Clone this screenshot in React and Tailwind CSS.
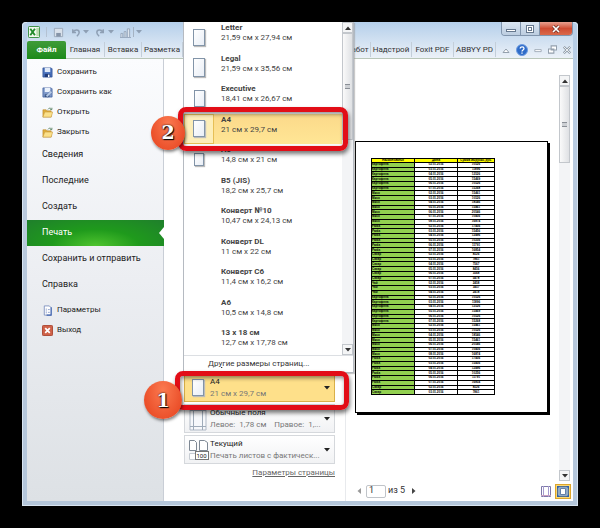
import { useState } from "react";

const menuIcons = { save: SaveIcon, saveAs: SaveAsIcon, open: FolderIcon, close: FolderIcon };

const fileActions = [
  { label: "Сохранить", icon: "save" },
  { label: "Сохранить как", icon: "saveAs" },
  { label: "Открыть", icon: "open" },
  { label: "Закрыть", icon: "close" },
];

const sections = ["Сведения", "Последние", "Создать", "Печать", "Сохранить и отправить", "Справка"];

const paperSizes = [
  { name: "Letter", size: "21,59 см x 27,94 см", icon: "h-[17px] w-3" },
  { name: "Legal", size: "21,59 см x 35,56 см", icon: "h-[19px] w-3" },
  { name: "Executive", size: "18,41 см x 26,67 см", icon: "h-[17px] w-[11px]" },
  { name: "A4", size: "21 см x 29,7 см", icon: "h-[17px] w-3" },
  { name: "A5", size: "14,8 см x 21 см", icon: "h-[13px] w-[10px]" },
  { name: "B5 (JIS)", size: "18,2 см x 25,7 см" },
  { name: "Конверт №10", size: "10,47 см x 24,13 см" },
  { name: "Конверт DL", size: "11 см x 22 см" },
  { name: "Конверт C6", size: "11,4 см x 16,2 см" },
  { name: "A6", size: "10,5 см x 14,8 см" },
  { name: "13 x 18 см", size: "12,7 см x 17,78 см" },
];

// [product, number of rows]
const groups = [
  ["Картофель", 6],
  ["Мясо", 7],
  ["Рыба", 6],
  ["Сахар", 6],
  ["Чай", 3],
  ["Картофель", 6],
  ["Мясо", 7],
  ["Рыба", 6],
  ["Сахар", 2],
];

const sums = {
  Картофель: ["10526", "11896", "12526", "15469", "10526", "15268"],
  Мясо: ["15461", "10526", "18546", "15461", "20546", "10456", "16874"],
  Рыба: ["17456", "15456", "12496", "10256", "11791", "16854"],
  Сахар: ["8526", "7861", "7567", "8456", "3568", "5478"],
  Чай: ["2458", "3457", "2418"],
};

const rows = groups.flatMap(([name, count]) =>
  Array.from({ length: count }, (_, i) => ({
    name,
    date: `0${i + 2}.01.2016`,
    sum: sums[name][i],
  }))
);

function SaveIcon() {
  return (
    <svg viewBox="0 0 12 12" className="size-[11px]">
      <path d="M1 1h9l1 1v9H1z" fill="#4a72bd" stroke="#2f4f96" strokeWidth=".8" />
      <path d="M3 1h6v4.500H3z" fill="#dfe9f8" />
      <path d="M3 7.500h6V11H3z" fill="#1f3a78" />
      <path d="M6.500 8.300h1.700V11H6.500z" fill="#fff" />
    </svg>
  );
}

function SaveAsIcon() {
  return (
    <svg viewBox="0 0 12 12" className="size-[11px]">
      <path d="M1 1h9l1 1v9H1z" fill="#7d97c8" stroke="#3f5f9f" strokeWidth=".8" />
      <path d="M3 1h6v4.500H3z" fill="#eaf1fb" />
      <path d="M3 8h5v3H3z" fill="#35507f" />
      <path d="M4 9.500 9.500 4l1.800 1.800L6 11z" fill="#b8cbe8" stroke="#58719c" strokeWidth=".5" />
    </svg>
  );
}

function FolderIcon() {
  return (
    <svg viewBox="0 0 12 12" className="size-[11px]">
      <path d="M1 3h3.500l1 1.200H10V11H1z" fill="#e0ae3c" stroke="#b3852a" strokeWidth=".6" />
      <path d="M1 11 3 5.500h8.700L10 11z" fill="#fbe08a" stroke="#c6983a" strokeWidth=".6" />
      <path d="M6.500 2.600C7.500.9 9.300.9 10.200 2.200M10.800.8v2H8.900" fill="none" stroke="#4c7a57" strokeWidth=".9" />
    </svg>
  );
}

function OptionsIcon() {
  return (
    <svg viewBox="0 0 12 12" className="size-[11px]">
      <path d="M2.500 1H8l2 2v8H2.500z" fill="#fff" stroke="#7388b8" strokeWidth=".9" />
      <path d="M10 2.500V11H5" fill="none" stroke="#3f63b0" strokeWidth="1.200" />
      <path d="M4 4.500h1.500M4 6.500h1.500M4 8.500h1.500M6.500 5h2M6.500 8h2" stroke="#6d84ba" strokeWidth=".8" />
    </svg>
  );
}

function ExitIcon() {
  return (
    <svg viewBox="0 0 12 12" className="size-[11px]">
      <rect x=".5" y=".5" width="11" height="11" rx="1" fill="#cf6148" stroke="#a9432e" />
      <path d="m3.500 3.500 5 5m0-5-5 5" stroke="#fff" strokeWidth="1.900" />
    </svg>
  );
}

function Caret({ className = "text-[#222]" }) {
  return (
    <svg viewBox="0 0 6 4" className={`h-1 w-1.5 shrink-0 ${className}`}>
      <path d="M0 0h6L3 3.500z" fill="currentColor" />
    </svg>
  );
}

function PageIcon({ className }) {
  return (
    <span
      className={`block border border-[#8294a8] bg-linear-to-br from-white to-[#e9eef6] shadow-[1px_1px_1px_#bbb] ${className}`}
    />
  );
}

function TitleBar() {
  return (
    <div className="flex h-[19px] items-start">
      <div className="flex items-center gap-1.5 pt-1 pl-px text-[#8e9fb4]">
        <svg viewBox="0 0 13 13" className="size-3">
          <rect x=".5" y=".5" width="12" height="12" rx="1" fill="#f3faef" stroke="#2c8a34" />
          <path d="M9 2h3v9H9z" fill="#b9dcae" />
          <path d="m2.500 3 5 7M7.500 3l-5 7" stroke="#218a2b" strokeWidth="2" />
        </svg>
        <span className="h-2.5 w-px bg-[#b4c2d2]" />
        <svg viewBox="0 0 12 12" className="size-[11px]">
          <path d="M1.500 1.500h9v9h-9z" fill="#d9e1eb" stroke="#9aa8ba" />
          <path d="M3.500 6.500h5v4h-5z" fill="#8594a8" />
        </svg>
        <svg viewBox="0 0 12 12" className="size-[11px]">
          <path d="M3 2.500v3.500h3.500M3.500 5.500C5 2.500 10 2.500 10 6c0 2-1.500 3-2.500 4" fill="none" stroke="currentColor" strokeWidth="1.600" />
        </svg>
        <Caret className="-ml-1 text-[#8e9fb4]" />
        <svg viewBox="0 0 12 12" className="size-[11px]">
          <path d="M9 2.500v3.500H5.500M8.500 5.500C7 2.500 2 2.500 2 6c0 2 1.500 3 2.500 4" fill="none" stroke="currentColor" strokeWidth="1.600" />
        </svg>
        <Caret className="-ml-1 text-[#8e9fb4]" />
        <svg viewBox="0 0 12 12" className="size-[11px]">
          <path d="M1 11V7h2v4M4.500 11V5h2v6M8 11V2h2.500v9M0 11.500h12" fill="#dde5ee" stroke="currentColor" strokeWidth=".9" />
        </svg>
        <span className="-ml-1 h-2.5 w-px bg-[#a4b2c2]" />
        <Caret className="-ml-1 text-[#8e9fb4]" />
      </div>
      <div className="ml-auto flex h-[14px] overflow-hidden rounded-b-sm border border-t-0 border-[#8195ad]">
        <button aria-label="Свернуть" className="flex w-[19px] items-center justify-center border-r border-[#8195ad] bg-linear-to-b from-[#dbe6f2] to-[#bccde0]">
          <span className="mt-1 h-[3px] w-2.5 border border-[#66788e] bg-white" />
        </button>
        <button aria-label="Развернуть" className="flex w-[19px] items-center justify-center border-r border-[#8195ad] bg-linear-to-b from-[#dbe6f2] to-[#bccde0]">
          <span className="flex size-2 items-center justify-center border border-[#66788e] bg-white">
            <span className="size-1 border border-[#66788e]" />
          </span>
        </button>
        <button aria-label="Закрыть окно" className="flex w-8 items-center justify-center bg-linear-to-b from-[#e8a090] via-[#cf4b32] to-[#d9694a]">
          <svg viewBox="0 0 8 8" className="size-2">
            <path d="m1 1 6 6m0-6L1 7" stroke="#6b2c22" strokeWidth="3" />
            <path d="m1 1 6 6m0-6L1 7" stroke="#fff" strokeWidth="1.700" />
          </svg>
        </button>
      </div>
    </div>
  );
}

function Tab({ children, className = "w-[37px]" }) {
  return (
    <button className={`h-[15px] shrink-0 border-r border-[#c3ced9] text-center text-[8px] leading-[14px] whitespace-nowrap ${className}`}>
      {children}
    </button>
  );
}

function Ribbon() {
  return (
    <div className="flex h-[18px] items-center border-b border-[#b9c6b9] text-[#333]">
      <button className="h-[18px] w-[39px] rounded-t-xs bg-linear-to-b from-[#3f9b38] to-[#1a8a1a] text-[8px] font-bold text-white">
        Файл
      </button>
      <Tab className="w-[39px]">Главная</Tab>
      <Tab>Вставка</Tab>
      <Tab className="w-[41px]">Разметка</Tab>
      <div className="ml-auto flex items-center">
        <Tab className="w-[26px]">Работ</Tab>
        <Tab className="w-[41px]">Надстрой</Tab>
        <Tab className="w-[42px]">Foxit PDF</Tab>
        <Tab className="w-[42px]">ABBYY PD</Tab>
      </div>
      <div className="flex w-[77px] items-center justify-between pr-0.5 pl-1.5 text-[#94a0ad]">
        <svg viewBox="0 0 8 8" className="size-2">
          <path d="M1 6.500 4 3l3 3.500z" fill="#fff" stroke="currentColor" />
        </svg>
        <svg viewBox="0 0 12 12" className="size-3">
          <circle cx="6" cy="6" r="5.500" fill="#2f6cc8" stroke="#6d9be0" />
          <path d="M4.200 4.600C4.200 2.200 8 2.300 8 4.500 8 6 6 5.900 6 7.400M6 8.400v1.300" fill="none" stroke="#fff" strokeWidth="1.300" />
        </svg>
        <svg viewBox="0 0 10 10" className="size-2">
          <path d="M1 4.500h8v2.500H1z" fill="#fff" stroke="currentColor" />
        </svg>
        <svg viewBox="0 0 10 10" className="size-[9px]">
          <path d="M3.500 1h6v4.500h-6zM.5 4.500h6V9h-6z" fill="#fff" stroke="currentColor" strokeWidth="1.200" />
        </svg>
        <svg viewBox="0 0 10 10" className="size-2">
          <path d="m1 1 8 8m0-8L1 9" stroke="currentColor" strokeWidth="3" />
          <path d="m1 1 8 8m0-8L1 9" stroke="#fff" strokeWidth="1" />
        </svg>
      </div>
    </div>
  );
}

function SmallItem({ icon, children }) {
  return (
    <button className="flex h-5 w-full items-center gap-1 pl-[15px] text-left text-[8px] text-[#222]">
      {icon}
      {children}
    </button>
  );
}

function Sidebar() {
  return (
    <nav className="w-[137px] shrink-0 border-r border-[#c9ced6] bg-linear-to-b from-[#fbfcfe] via-[#eceef2] to-[#dde1e5] pt-[3px]">
      {fileActions.map(({ label, icon }) => {
        const Icon = menuIcons[icon];
        return (
          <SmallItem key={label} icon={<Icon />}>
            {label}
          </SmallItem>
        );
      })}
      {sections.map((label) =>
        label === "Печать" ? (
          <button
            key={label}
            className="flex h-[26px] w-[137px] items-center justify-between bg-[radial-gradient(ellipse_at_50%_100%,#4fc42e,#1f9a1c_45%,#1f7f2c)] pl-[15px] text-[9px] text-white"
          >
            {label}
            <svg viewBox="0 0 5 12" className="h-3 w-[5px]">
              <path d="M5 0v12L0 6z" fill="#fff" />
            </svg>
          </button>
        ) : (
          <button key={label} className="flex h-[26px] w-full items-center pl-[15px] text-[9px] text-[#222]">
            {label}
          </button>
        )
      )}
      <div className="pt-0.5">
        <SmallItem icon={<OptionsIcon />}>Параметры</SmallItem>
        <SmallItem icon={<ExitIcon />}>Выход</SmallItem>
      </div>
    </nav>
  );
}

function Callout({ number, ring, badge }) {
  return (
    <>
      <span className={`pointer-events-none absolute z-20 rounded-lg border-[5px] border-[#e20d17] shadow-[1px_3px_4px_#0008,inset_1px_2px_4px_#0007] ${ring}`} />
      <span
        className={`absolute z-30 flex items-center justify-center rounded-full bg-radial-[at_50%_25%] from-[#fb7a50] to-[#e5401c] font-['DejaVu_Serif',serif] text-[19px] font-bold text-white shadow-[1px_2px_3px_#0007] [text-shadow:0_0_2px_#000,1px_1px_1px_#000] ${badge}`}
      >
        {number}
      </span>
    </>
  );
}

function ScrollButton({ up, label }) {
  return (
    <button aria-label={label} className="flex h-[11px] w-full shrink-0 items-center justify-center border border-[#c3c7cc] bg-[#f4f5f6]">
      <Caret className={up ? "rotate-180 text-[#333]" : "text-[#333]"} />
    </button>
  );
}

function Scrollbar({ thumb }) {
  return (
    <div className="flex w-[11px] shrink-0 flex-col bg-[#f3f4f6]">
      <ScrollButton up label="Вверх" />
      <div className={`flex items-center justify-center border border-[#c3c7cc] bg-linear-to-r from-[#fafafa] to-[#dfe1e4] ${thumb}`}>
        <span className="h-[5px] w-[5px] border-y border-[#8a8f96] bg-[#cdd0d4]" />
      </div>
      <div className="flex-1" />
      <ScrollButton label="Вниз" />
    </div>
  );
}

function SizeMenu({ selected, onSelect }) {
  return (
    <div className="absolute bottom-full -left-px z-10 w-[171px] border-x border-b border-[#b5bac1] bg-white shadow-[1px_1px_1px_#9998]">
      <div className="flex h-[334px] border-b border-[#dcdfe3]">
        <ul className="grid h-[336px] flex-1 auto-rows-fr">
          {paperSizes.map((paper) => (
            <li key={paper.name} className="relative">
              <button
                onClick={() => onSelect(paper)}
                className={`flex size-full text-left ${paper.name === selected ? "bg-linear-to-b from-[#fbd98a] to-[#ffe695]" : ""}`}
              >
                <span
                  className={`flex h-full w-[30px] items-center justify-center ${paper.name === selected ? "border border-[#e6bf55] bg-[#fdeeb8]" : ""}`}
                >
                  {paper.icon && <PageIcon className={paper.icon} />}
                </span>
                <span className="pt-px pl-[7px] text-[8px] leading-[10px] whitespace-nowrap text-[#444]">
                  <b className="block">{paper.name}</b>
                  {paper.size}
                </span>
              </button>
              {paper.name === "A4" && (
                <Callout number="2" ring="-inset-x-1.5 -inset-y-[7px]" badge="-left-[33px] top-0.5 size-[34px]" />
              )}
            </li>
          ))}
        </ul>
        <Scrollbar thumb="h-[107px]" />
      </div>
      <button className="block h-4 w-full pl-6 text-left text-[8px] leading-4 text-[#333]">
        Др<u>у</u>гие размеры страниц...
      </button>
    </div>
  );
}

function SettingButton({ icon, title, detail, active }) {
  return (
    <button
      className={`flex h-[29px] w-full items-center border pr-1 text-left text-[8px] whitespace-nowrap ${active ? "border-[#d9b04a] bg-[#fee08a]" : "border-[#d5d8dc] bg-linear-to-b from-white to-[#f1f2f4]"}`}
    >
      <span className="flex w-[25px] shrink-0 justify-center">{icon}</span>
      <span className="min-w-0 flex-1 leading-3 text-[#777]">
        <span className="block text-[#222]">{title}</span>
        <span className="block whitespace-pre">{detail}</span>
      </span>
      <Caret />
    </button>
  );
}

function Settings() {
  const [paper, setPaper] = useState(paperSizes[3]);

  return (
    <div className="flex w-[182px] shrink-0 flex-col justify-end gap-0.5 border-r border-[#e8eaed] pr-2.5 pb-[21px] pl-5">
      <div className="relative">
        <SizeMenu selected={paper.name} onSelect={setPaper} />
        <SettingButton active icon={<PageIcon className="h-[17px] w-3" />} title={paper.name} detail={paper.size} />
        <Callout number="1" ring="-left-[9px] -right-3.5 -top-0.5 -bottom-2" badge="-left-10 top-2 size-[38px]" />
      </div>
      <SettingButton
        icon={
          <svg viewBox="0 0 18 24" className="h-6 w-[18px]">
            <path d="M1 0h16v23H1z" fill="#f6f8fb" stroke="#b0b9c5" />
            <path d="M4.500 0v23M13.500 0v23M1 3.500h16M1 19.500h16" stroke="#9fabb9" />
          </svg>
        }
        title="Обычные поля"
        detail="Левое:  1,78 см    Правое:  1,..."
      />
      <SettingButton
        icon={
          <svg viewBox="0 0 22 24" className="h-6 w-[22px]">
            <path d="M2.500 2.500h5l2 2v8h-7zM12.500 2.500h5l3 2v8h-8z" fill="#fff" stroke="#7e8894" />
            <path d="M2.500 15.500h6v6h-6z" fill="#fff" stroke="#c7ccd3" />
            <rect x="8.500" y="13.500" width="13" height="8" fill="#fff" stroke="#777" />
            <text x="9.500" y="20" fontSize="6" fill="#222">100</text>
          </svg>
        }
        title="Текущий"
        detail="Печать листов с фактическ..."
      />
      <a href="#page-setup" className="self-end text-[8px] leading-[14px] text-[#666] underline">
        Параметры страницы
      </a>
    </div>
  );
}

function Sheet() {
  return (
    <div className="mt-[82px] mr-[11px] ml-[9px] h-[272px] border border-black bg-white pt-4 pl-[15px] shadow-[2px_2px_0_#000]">
      <table className="h-[237px] w-[124px] table-fixed border-collapse font-['Liberation_Sans',sans-serif] text-[3px] leading-[3px] font-bold text-black">
        <thead>
          <tr className="bg-[#ffff00] italic">
            <th className="w-[43px] border border-black p-0">Наименование</th>
            <th className="w-[43px] border border-black p-0">Дата</th>
            <th className="border border-black p-0 whitespace-nowrap">Сумма выручки, руб.</th>
          </tr>
        </thead>
        <tbody>
          {rows.map((row, i) => (
            <tr key={i}>
              <td className="border border-black bg-[#92d050] p-0">{row.name}</td>
              <td className="border border-black p-0 text-center">{row.date}</td>
              <td className="border border-black p-0 text-center">{row.sum}</td>
            </tr>
          ))}
        </tbody>
      </table>
    </div>
  );
}

function Preview() {
  return (
    <div className="flex min-w-0 flex-1 flex-col">
      <div className="flex flex-1">
        <div className="min-w-0 flex-1">
          <Sheet />
        </div>
        <div className="mr-[3px] flex pt-4">
          <Scrollbar thumb="h-[77px]" />
        </div>
      </div>
      <div className="flex h-5 items-center pr-0.5 pl-2.5 text-[9px] text-[#333]">
        <button aria-label="Предыдущая страница">
          <Caret className="rotate-90 text-[#999]" />
        </button>
        <input
          aria-label="Страница"
          defaultValue="1"
          className="ml-1 h-[13px] w-5 rounded-xs border border-[#c0c4c9] pl-0.5 outline-none"
        />
        <span className="pl-0.5">из 5</span>
        <button aria-label="Следующая страница" className="ml-1.5">
          <Caret className="-rotate-90 text-[#444]" />
        </button>
        <button aria-label="Показать поля" className="ml-auto">
          <svg viewBox="0 0 10 11" className="h-[11px] w-2.5">
            <path d="M.5.5h9v10h-9z" fill="#fff" stroke="#7d78a8" />
            <path d="M2.500 0v11M7.500 0v11" stroke="#a59bd0" />
            <path d="M0 9.500h10" stroke="#c9a0c0" />
          </svg>
        </button>
        <button aria-label="По размеру страницы" className="ml-1 border border-[#dda52c] bg-[#fbd874] p-px">
          <svg viewBox="0 0 12 11" className="h-[11px] w-3">
            <path d="M.5.5h11v10H.5z" fill="#8fa9c7" stroke="#55708e" />
            <path d="M3.500 2.500h5v6h-5z" fill="#fff" stroke="#6480a8" />
            <path d="M0 0h3L0 3zM12 0v3L9 0zM0 11V8l3 3zM12 11H9l3-3z" fill="#2e5fa8" />
          </svg>
        </button>
      </div>
    </div>
  );
}

export default function App() {
  return (
    <div className="flex min-h-screen bg-black p-[22px] font-['Roboto','Open_Sans',sans-serif]">
      <div className="flex min-w-0 flex-1 flex-col rounded-t-sm bg-linear-to-b from-[#b8cfe8] via-[#b9c9dc] via-40% to-[#b4c6da] px-[5px] pb-[5px] shadow-[inset_0_0_0_1px_#d8e4f0]">
        <div className="bg-linear-to-b from-[#b5cfea] to-[#edf2f8]">
          <TitleBar />
          <Ribbon />
        </div>
        <div className="flex flex-1 bg-white">
          <Sidebar />
          <Settings />
          <Preview />
        </div>
      </div>
    </div>
  );
}
